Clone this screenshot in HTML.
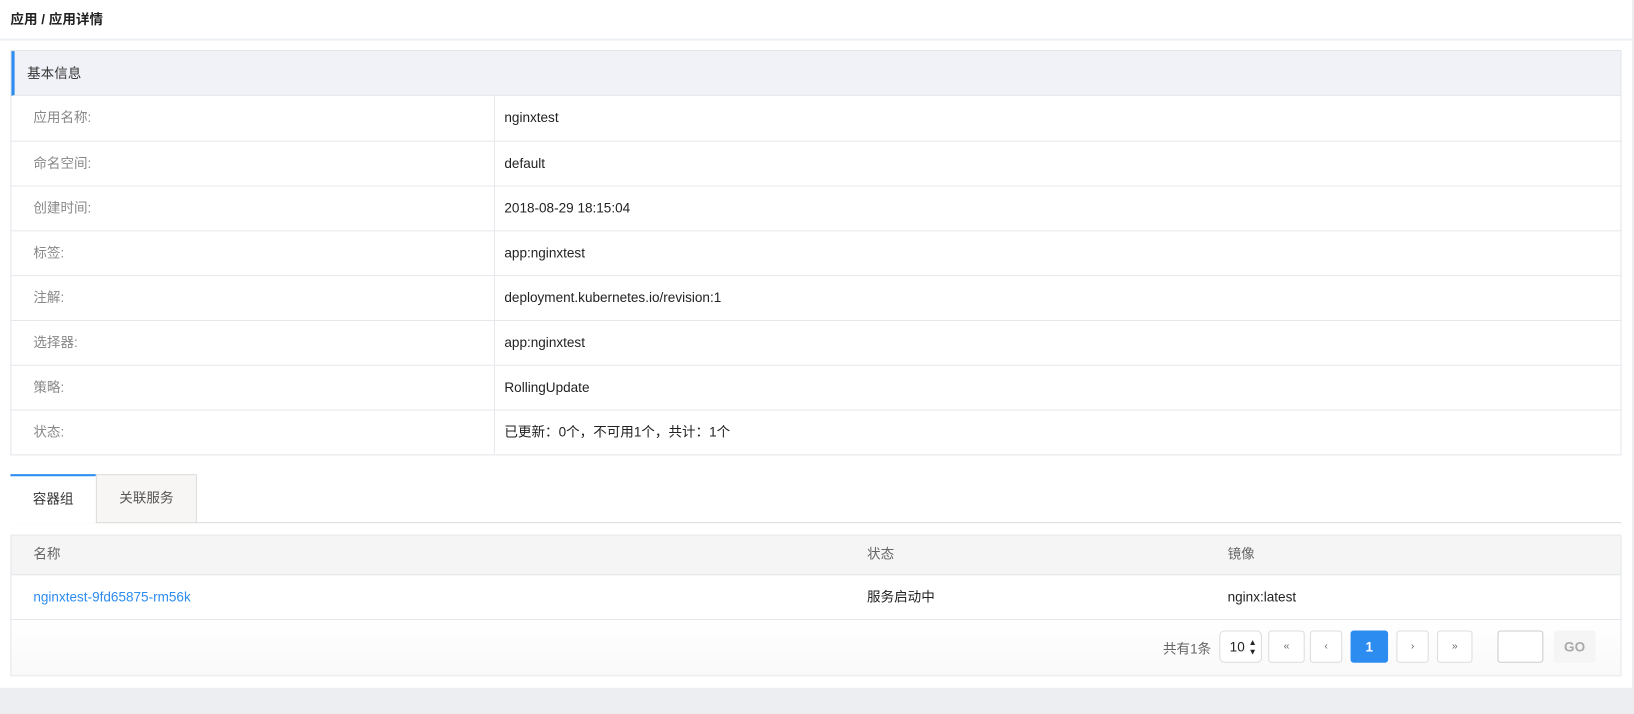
<!DOCTYPE html>
<html><head><meta charset="utf-8"><style>
*{box-sizing:border-box;margin:0;padding:0}
body{width:1634px;height:714px;background:#eceef2;font-family:"Liberation Sans","Noto Sans CJK SC",sans-serif;font-size:13px;color:#333;position:relative;overflow:hidden}
.wrap{position:absolute;left:0;top:0;width:1568px;height:685px;transform:scale(1.0421);transform-origin:0 0}
.page{position:absolute;left:0;top:0;width:1566px;height:660px;background:#fff}
.crumb{position:absolute;left:10px;top:8px;font-weight:bold;font-size:13px;color:#222}
.hr{position:absolute;left:0;top:37px;width:1566px;height:2px;background:#edf0f4}
.box{position:absolute;left:10px;top:48px;width:1546px;border:1px solid #e3e6ea}
.bh{height:43px;background:#f1f2f7;border-left:3px solid #2d8cf0;padding-left:12px;line-height:43px;color:#333;border-bottom:1px solid #e3e6ea}
.row{height:43px;border-top:1px solid #e6e8eb;display:flex;line-height:42px}
.k{width:464px;padding-left:21px;color:#888;border-right:1px solid #e6e8eb}
.v{padding-left:9px;color:#222}
.tabs{position:absolute;left:10px;top:455px;width:1546px;height:47px;border-bottom:1px solid #ddd}
.t1{position:absolute;left:0;top:0;width:82px;height:47px;background:#fff;border-top:2px solid #2d8cf0;text-align:center;line-height:44px;color:#333}
.t2{position:absolute;left:82px;top:0;width:97px;height:47px;background:#f7f6f5;border:1px solid #ddd;text-align:center;line-height:44px;color:#555}
.tbl{position:absolute;left:10px;top:513px;width:1546px;height:136px;border:1px solid #e3e6ea}
.th{height:38px;background:#f5f5f5;border-bottom:1px solid #e3e6ea;position:relative;color:#666;line-height:36px}
.tr{height:43px;border-bottom:1px solid #e3e6ea;position:relative;line-height:42px;color:#222}
.c{position:absolute;left:21px}
.c2{position:absolute;left:821px}
.c3{position:absolute;left:1167px}
a{color:#2d8cf0;text-decoration:none}
.pg{position:absolute;top:605px;height:31px;border:1px solid #ddd;border-radius:3px;background:#fff;text-align:center;line-height:29px;font-size:10px;color:#666}
</style></head><body>
<div class="wrap">
<div class="page">
<div class="crumb">应用 / 应用详情</div>
<div class="hr"></div>
<div class="box">
<div class="bh">基本信息</div>
<div class="row" style="border-top:none"><div class="k">应用名称:</div><div class="v">nginxtest</div></div>
<div class="row"><div class="k">命名空间:</div><div class="v">default</div></div>
<div class="row"><div class="k">创建时间:</div><div class="v">2018-08-29 18:15:04</div></div>
<div class="row"><div class="k">标签:</div><div class="v">app:nginxtest</div></div>
<div class="row"><div class="k">注解:</div><div class="v">deployment.kubernetes.io/revision:1</div></div>
<div class="row"><div class="k">选择器:</div><div class="v">app:nginxtest</div></div>
<div class="row"><div class="k">策略:</div><div class="v">RollingUpdate</div></div>
<div class="row"><div class="k">状态:</div><div class="v">已更新：0个，不可用1个，共计：1个</div></div>
</div>
<div class="tabs"><div class="t1">容器组</div><div class="t2">关联服务</div></div>
<div class="tbl">
<div class="th"><span class="c">名称</span><span class="c2">状态</span><span class="c3">镜像</span></div>
<div class="tr"><span class="c"><a>nginxtest-9fd65875-rm56k</a></span><span class="c2">服务启动中</span><span class="c3">nginx:latest</span></div>
<div style="height:53px;background:linear-gradient(#fff,#f9f9f9)"></div>
</div>
<div style="position:absolute;left:1116px;top:612px;color:#666">共有1条</div>
<div class="pg" style="left:1170px;width:41px;border-radius:5px;font-size:13px;color:#222;text-align:left;padding-left:9px">10<span style="position:absolute;right:4px;top:0;font-size:8px;line-height:9px;padding-top:6px">▲<br>▼</span></div>
<div class="pg" style="left:1217px;width:35px">«</div>
<div class="pg" style="left:1257px;width:31px">‹</div>
<div class="pg" style="left:1296px;width:36px;background:#2d8cf0;border-color:#2d8cf0;color:#fff;font-size:13px;font-weight:bold">1</div>
<div class="pg" style="left:1340px;width:31px">›</div>
<div class="pg" style="left:1379px;width:34px">»</div>
<div class="pg" style="left:1437px;width:44px;border-color:#ccc"></div>
<div class="pg" style="left:1491px;width:40px;background:#f5f5f5;border-color:#f5f5f5;color:#aaa;font-size:13px;font-weight:bold">GO</div>
</div>
</div>
</body></html>
